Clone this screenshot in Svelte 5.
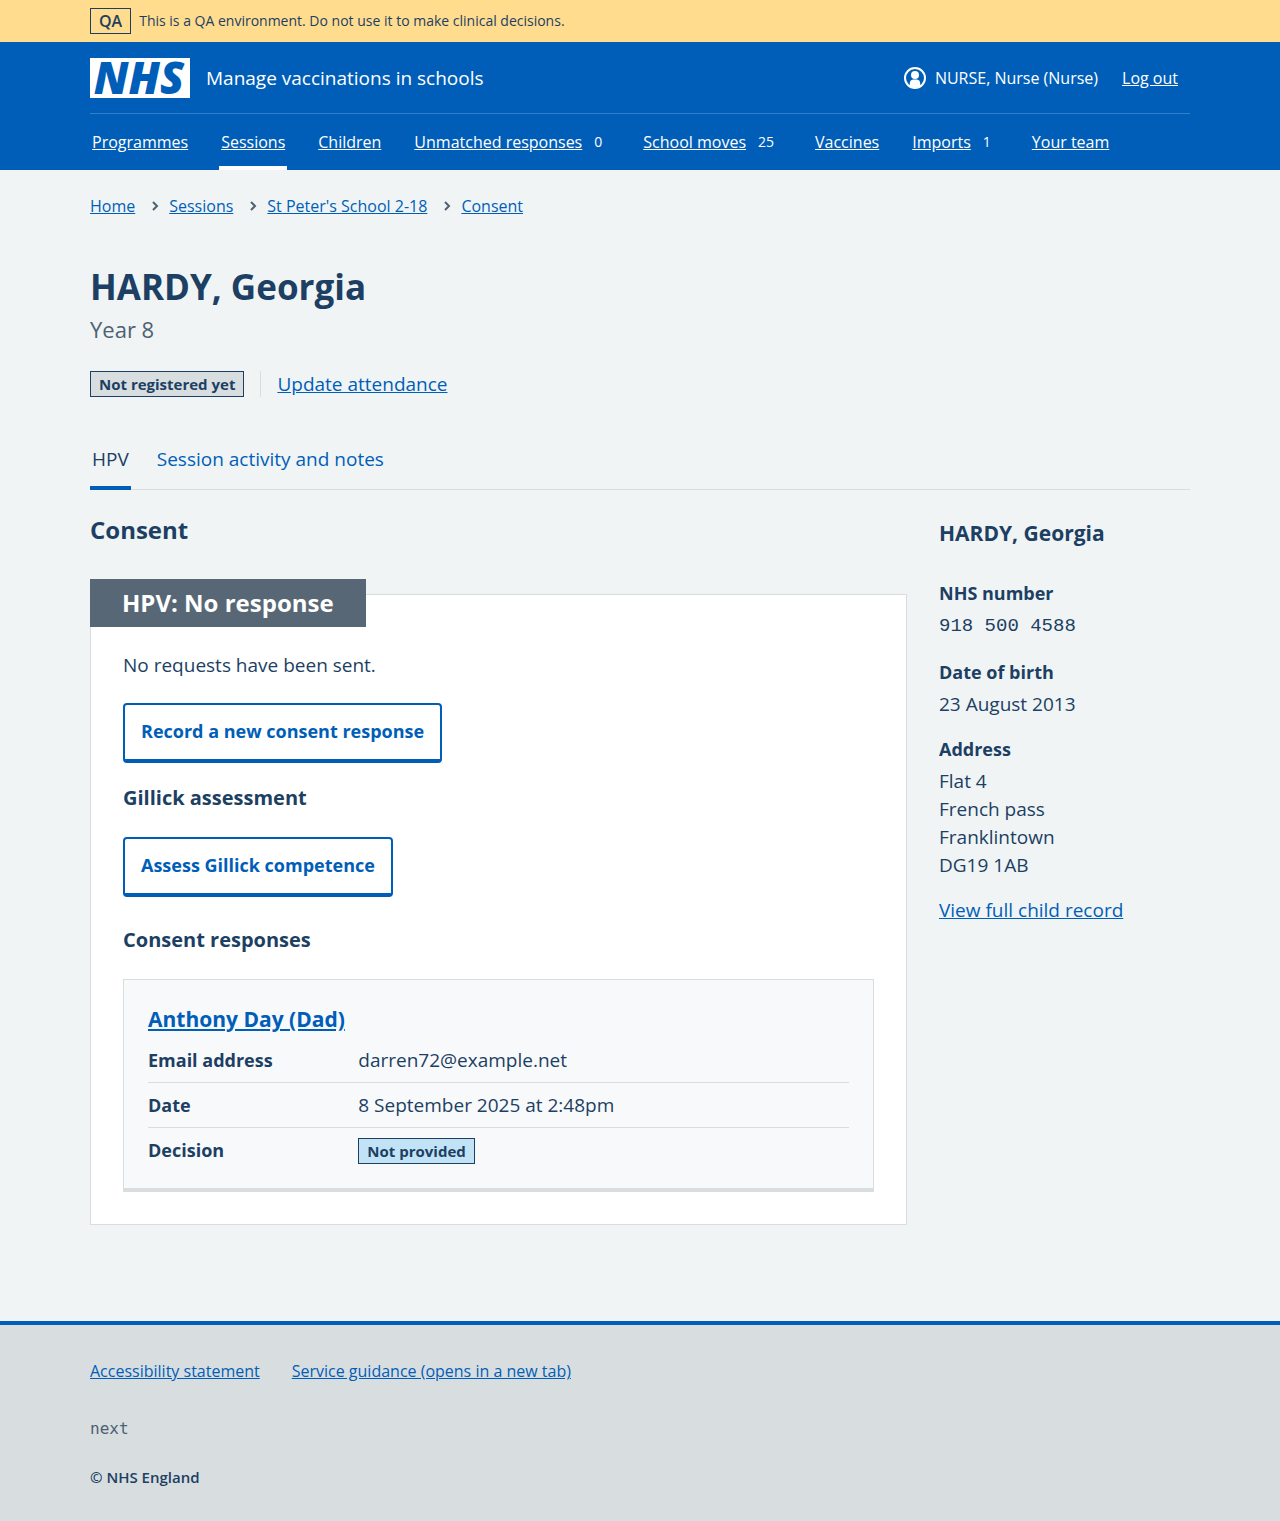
<script>
  const navItems = [
    { label: 'Programmes' },
    { label: 'Sessions', current: true },
    { label: 'Children' },
    { label: 'Unmatched responses', count: 0 },
    { label: 'School moves', count: 25 },
    { label: 'Vaccines' },
    { label: 'Imports', count: 1 },
    { label: 'Your team' }
  ];

  const breadcrumbs = ['Home', 'Sessions', "St Peter's School 2-18", 'Consent'];
  const address = ['Flat 4', 'French pass', 'Franklintown', 'DG19 1AB'];
</script>

<svelte:head>
  <title>HARDY, Georgia</title>
</svelte:head>

<aside class="environment">
  <div class="container environment-inner">
    <strong class="tag tag-clear">QA</strong>
    <span>This is a QA environment. Do not use it to make clinical decisions.</span>
  </div>
</aside>

<header class="header">
  <div class="container">
    <div class="header-top">
      <a class="service" href="#home">
        <svg class="logo" viewBox="0 0 100 40" role="img" aria-label="NHS">
          <rect width="100" height="40" fill="#fff" />
          <text x="49" y="36" text-anchor="middle">NHS</text>
        </svg>
        <span>Manage vaccinations in schools</span>
      </a>
      <div class="account">
        <span class="user">
          <svg class="user-icon" viewBox="0 0 24 24" aria-hidden="true">
            <circle cx="12" cy="12" r="10" fill="none" stroke="#fff" stroke-width="2" />
            <circle cx="12" cy="9" r="4" fill="#fff" />
            <path d="M6.8 20.5V17.5a4 4 0 0 1 4-4h2.4a4 4 0 0 1 4 4v3a10 10 0 0 1-10.4 0z" fill="#fff" />
          </svg>
          NURSE, Nurse (Nurse)
        </span>
        <a href="#logout">Log out</a>
      </div>
    </div>
    <nav aria-label="Menu">
      <ul class="nav">
        {#each navItems as item}
          <li class:current={item.current}>
            <a href="#nav" aria-current={item.current ? 'true' : undefined}>{item.label}</a>
            {#if item.count !== undefined}
              <span class="count">{item.count}</span>
            {/if}
          </li>
        {/each}
      </ul>
    </nav>
  </div>
</header>

<div class="container page">
  <nav aria-label="Breadcrumb">
    <ol class="breadcrumbs">
      {#each breadcrumbs as crumb, i}
        <li>
          {#if i > 0}
            <svg class="chevron" viewBox="0 0 8 10" aria-hidden="true">
              <path d="M2 1l4 4-4 4" fill="none" stroke="#4c6272" stroke-width="2" />
            </svg>
          {/if}
          <a href="#crumb">{crumb}</a>
        </li>
      {/each}
    </ol>
  </nav>

  <main>
    <h1>HARDY, Georgia</h1>
    <p class="caption">Year 8</p>

    <div class="actions">
      <strong class="tag tag-grey">Not registered yet</strong>
      <a href="#attendance">Update attendance</a>
    </div>

    <nav aria-label="Patient sections">
      <ul class="tabs">
        <li class="selected"><a href="#hpv" aria-current="page">HPV</a></li>
        <li><a href="#activity">Session activity and notes</a></li>
      </ul>
    </nav>

    <div class="columns">
      <div class="main-column">
        <h2>Consent</h2>

        <section class="card">
          <h3 class="card-label">HPV: No response</h3>
          <p>No requests have been sent.</p>
          <button type="button">Record a new consent response</button>

          <h4 class="gillick">Gillick assessment</h4>
          <button type="button">Assess Gillick competence</button>

          <h4 class="responses">Consent responses</h4>
          <article class="response">
            <h4 class="name"><a href="#response">Anthony Day (Dad)</a></h4>
            <dl class="summary">
              <div>
                <dt>Email address</dt>
                <dd>darren72@example.net</dd>
              </div>
              <div>
                <dt>Date</dt>
                <dd>8 September 2025 at 2:48pm</dd>
              </div>
              <div>
                <dt>Decision</dt>
                <dd><strong class="tag tag-blue">Not provided</strong></dd>
              </div>
            </dl>
          </article>
        </section>
      </div>

      <aside class="side-column">
        <h4 class="name">HARDY, Georgia</h4>
        <dl class="details">
          <div>
            <dt>NHS number</dt>
            <dd class="mono">918 500 4588</dd>
          </div>
          <div>
            <dt>Date of birth</dt>
            <dd>23 August 2013</dd>
          </div>
          <div>
            <dt>Address</dt>
            <dd>
              {#each address as line}
                <span class="line">{line}</span>
              {/each}
            </dd>
          </div>
        </dl>
        <a href="#record">View full child record</a>
      </aside>
    </div>
  </main>
</div>

<footer>
  <div class="container">
    <ul class="footer-links">
      <li><a href="#accessibility">Accessibility statement</a></li>
      <li><a href="#guidance">Service guidance (opens in a new tab)</a></li>
    </ul>
    <p class="version">next</p>
    <p class="copyright">© NHS England</p>
  </div>
</footer>

<style>
  :global(body) {
    background: #d8dde0;
    color: #1c3f63;
    font-family: "Open Sans", "Noto Sans", sans-serif;
    font-size: 19px;
    line-height: 28px;
  }

  :global(#app) {
    background: #f0f4f5;
  }

  h1, h2, h3, h4, p, ul, ol, dl, dd {
    margin: 0;
    padding: 0;
  }

  ul, ol {
    list-style: none;
  }

  h1, h2, h3, h4, dt, strong {
    font-weight: 700;
  }

  a {
    color: #005eb8;
  }

  .container {
    box-sizing: border-box;
    max-width: 1164px;
    margin: 0 auto;
    padding: 0 32px;
  }

  .tag {
    display: inline-block;
    padding: 0 8px;
    border: 1px solid currentColor;
    font-size: 15px;
    line-height: 24px;
    white-space: nowrap;
  }

  .tag-clear { font-size: 16px; font-weight: 600; }
  .tag-grey { background: #d8dde0; }
  .tag-blue { background: #c2e3f5; }

  .environment {
    background: #ffdc8e;
    font-size: 14px;
    line-height: 24px;
  }

  .environment-inner {
    display: flex;
    align-items: center;
    gap: 8px;
    padding-top: 8px;
    padding-bottom: 8px;
  }

  .header {
    background: #005eb8;
    color: #fff;
    font-size: 16px;
    line-height: 24px;
  }

  .header a {
    color: #fff;
  }

  .header-top {
    display: flex;
    align-items: center;
    justify-content: space-between;
    padding: 16px 12px 15px 0;
    border-bottom: 1px solid #337ec6;
  }

  .service {
    display: flex;
    align-items: center;
    gap: 16px;
    font-size: 19px;
    text-decoration: none;
  }

  .logo {
    width: 100px;
    height: 40px;
    overflow: visible;
  }

  .logo text {
    fill: #005eb8;
    font: italic 800 44px "Open Sans", sans-serif;
  }

  .account {
    display: flex;
    gap: 24px;
  }

  .user {
    display: flex;
    align-items: center;
    gap: 8px;
  }

  .user-icon {
    width: 24px;
    height: 24px;
  }

  .nav {
    display: flex;
    flex-wrap: wrap;
    gap: 0 29px;
  }

  .nav li {
    display: flex;
    align-items: center;
    padding: 16px 2px 12px;
    border-bottom: 4px solid transparent;
  }

  .nav .current {
    border-color: #fff;
  }

  .count {
    padding: 0 8px;
    margin-left: 4px;
    font-size: 14px;
  }

  .page {
    padding-top: 24px;
    padding-bottom: 96px;
  }

  .breadcrumbs {
    display: flex;
    flex-wrap: wrap;
    font-size: 16px;
    line-height: 24px;
  }

  .breadcrumbs li {
    display: flex;
    align-items: center;
  }

  .chevron {
    width: 8px;
    height: 10px;
    margin: 0 10px 0 16px;
  }

  h1 {
    margin-top: 48px;
    font-size: 35px;
    line-height: 42px;
  }

  .caption {
    margin-top: 4px;
    color: #4c6272;
    font-size: 22px;
    line-height: 34px;
  }

  .actions {
    display: flex;
    align-items: center;
    gap: 16px;
    margin-top: 25px;
    line-height: 26px;
  }

  .actions a {
    padding-left: 16px;
    border-left: 1px solid #d8dde0;
  }

  .tabs {
    display: flex;
    gap: 24px;
    margin-top: 32px;
    box-shadow: inset 0 -1px #d8dde0;
  }

  .tabs li {
    padding: 16px 2px 13px;
    border-bottom: 4px solid transparent;
  }

  .tabs a {
    text-decoration: none;
  }

  .tabs .selected {
    border-color: #005eb8;
  }

  .selected a {
    color: #1c3f63;
  }

  .columns {
    display: grid;
    grid-template-columns: minmax(0, 817fr) minmax(0, 251fr);
    gap: 32px;
    padding-top: 24px;
  }

  h2, .card-label {
    font-size: 24px;
    line-height: 32px;
  }

  h4 {
    font-size: 20px;
    line-height: 30px;
  }

  .name {
    font-size: 21px;
  }

  .card {
    margin-top: 48px;
    padding: 0 32px 32px;
    border: 1px solid #d8dde0;
    background: #fff;
  }

  .card-label {
    width: fit-content;
    margin: -16px 0 24px -33px;
    padding: 8px 32px;
    background: #586776;
    color: #fff;
  }

  button {
    display: block;
    margin: 24px 0 0;
    padding: 12px 16px 14px;
    border: 2px solid #005eb8;
    border-radius: 4px;
    border-bottom-width: 4px;
    background: #fff;
    color: #005eb8;
    font: 700 18px/28px "Open Sans", "Noto Sans", sans-serif;
  }

  .gillick {
    margin-top: 20px;
  }

  .responses {
    margin-top: 28px;
  }

  .response {
    margin-top: 24px;
    padding: 24px;
    border: 1px solid #d8dde0;
    border-bottom-width: 4px;
    background: #f8f9fb;
  }

  .summary {
    margin-top: 12px;
  }

  dt {
    font-size: 18px;
  }

  .summary div {
    display: grid;
    grid-template-columns: 3fr 7fr;
    padding-bottom: 8px;
    margin-bottom: 8px;
    border-bottom: 1px solid #d8dde0;
  }

  .summary div:last-child {
    margin: 0;
    padding: 0;
    border: 0;
  }

  .side-column h4 {
    margin: 4px 0 31px;
  }

  .details div {
    margin-bottom: 17px;
  }

  .details dt {
    margin-bottom: 4px;
  }

  .mono {
    font-family: "Liberation Mono", monospace;
    line-height: 30px;
  }

  .line {
    display: block;
  }

  footer {
    padding: 34px 0 32px;
    border-top: 4px solid #005eb8;
    background: #d8dde0;
    font-size: 16px;
    line-height: 24px;
  }

  .footer-links {
    display: flex;
    flex-wrap: wrap;
    gap: 8px 32px;
  }

  .version {
    margin-top: 34px;
    color: #4c6272;
    font-family: "DejaVu Sans Mono", monospace;
  }

  .copyright {
    margin-top: 24px;
    font-size: 15px;
    font-weight: 600;
  }
</style>
